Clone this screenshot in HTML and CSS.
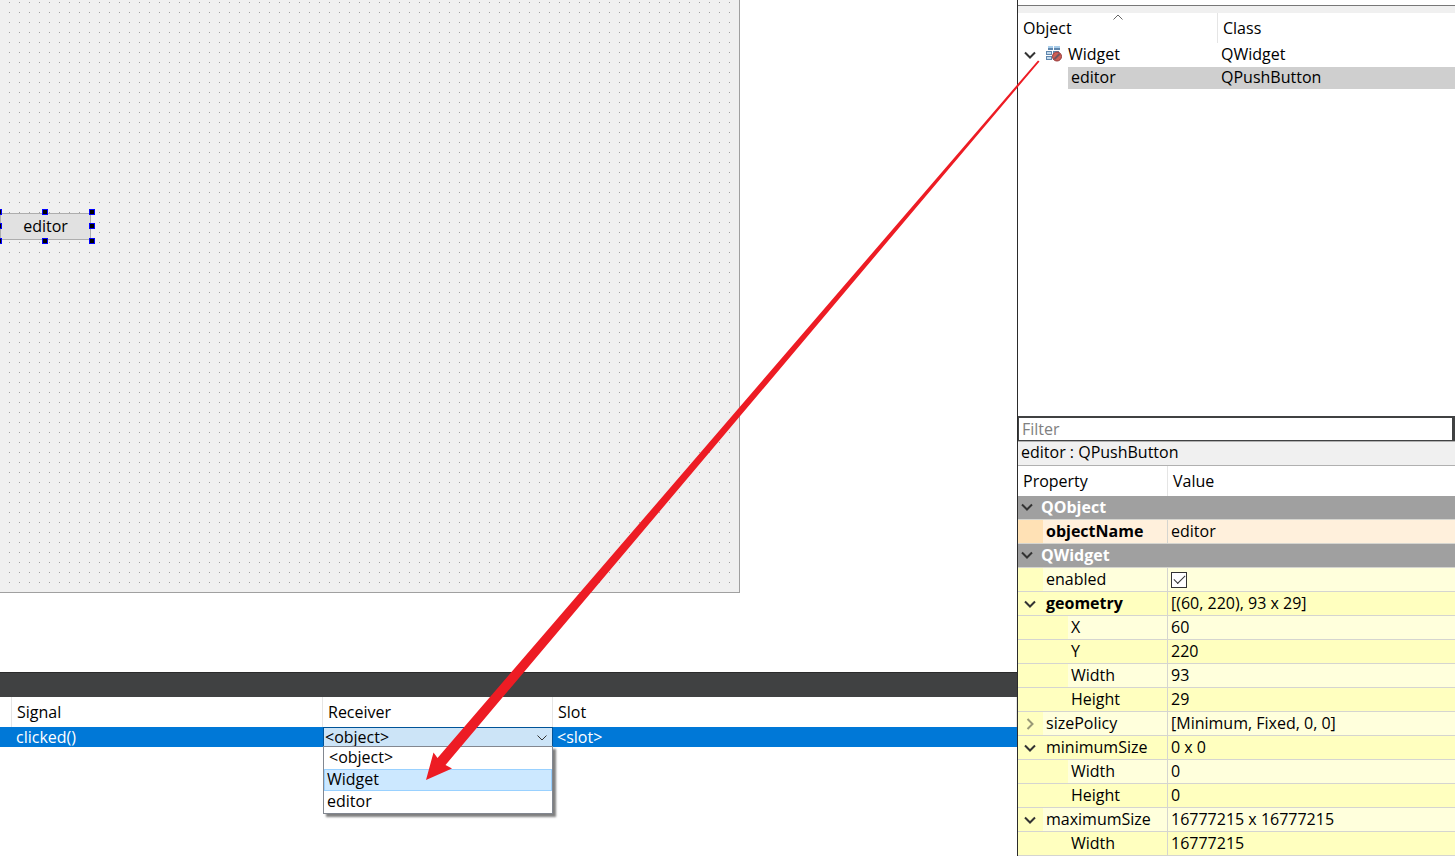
FILE: index.html
```html
<!DOCTYPE html>
<html lang="en">
<head>
<meta charset="utf-8">
<title>Form designer</title>
<link rel="stylesheet" href="styles.css">
</head>
<body>
<svg class="symbols" aria-hidden="true">
  <symbol id="chevron" viewBox="0 0 12 8"><path d="M1 1.5 6 6.5 11 1.5" fill="none" stroke="currentColor" stroke-width="2"/></symbol>
  <symbol id="chevron-thin" viewBox="0 0 12 8"><path d="M1.500 1.500 6 6 10.500 1.500" fill="none" stroke="currentColor" stroke-width="1"/></symbol>
</svg>
<div class="app">
  <main class="workspace">
    <section class="design-area">
      <div class="form">
        <div class="selection">
          <button class="push-button" type="button">editor</button>
          <span class="handle top left"></span><span class="handle top center"></span><span class="handle top right"></span>
          <span class="handle middle left"></span><span class="handle middle right"></span>
          <span class="handle bottom left"></span><span class="handle bottom center"></span><span class="handle bottom right"></span>
        </div>
      </div>
    </section>
    <section class="signals">
      <div class="dock-bar"></div>
      <table class="signal-table">
        <colgroup><col class="col-sender"><col class="col-signal"><col class="col-receiver"><col></colgroup>
        <thead><tr><th></th><th>Signal</th><th>Receiver</th><th>Slot</th></tr></thead>
        <tbody><tr>
          <td></td>
          <td>clicked()</td>
          <td class="combo-cell">
            <div class="combo">
              <select class="combo-select" aria-label="Receiver"><option>&lt;object&gt;</option><option>Widget</option><option>editor</option></select>
              <svg class="combo-arrow"><use href="#chevron-thin"/></svg>
              <ul class="combo-list">
                <li class="placeholder">&lt;object&gt;</li>
                <li class="active">Widget</li>
                <li>editor</li>
              </ul>
            </div>
          </td>
          <td>&lt;slot&gt;</td>
        </tr></tbody>
      </table>
    </section>
  </main>
  <aside class="sidebar">
    <div class="dock-edge"></div>
    <section class="inspector">
      <svg class="sort-arrow" viewBox="0 0 10 6"><path d="M.5 5.500 5 1 9.500 5.500" fill="none" stroke="#666"/></svg>
      <table class="object-table">
        <colgroup><col class="col-object"><col></colgroup>
        <thead><tr><th>Object</th><th>Class</th></tr></thead>
        <tbody>
          <tr>
            <td><div class="tree-cell">
              <svg class="chevron"><use href="#chevron"/></svg>
              <svg class="widget-icon" viewBox="0 0 18 18">
                <path d="M3 1h5v4H3zM9 1h6v4H9zM1 6h6v4H1zM8 6h6v4H8zM1 11h6v4H1zM8 11h6v4H8z" fill="#5f86ad"/>
                <path d="M3 1h5v2H3zM9 1h6v2H9z" fill="#a9cdea"/>
                <path d="M2 7h4v2H2zM9 7h4v2H9zM2 12h4v2H2z" fill="#c3d9ec"/>
                <circle cx="12" cy="11.500" r="4.500" fill="#cf5f55" stroke="#96383a"/>
                <path d="M9.500 14 14.500 9" stroke="#6f5560" stroke-width="2"/>
              </svg>
              <span>Widget</span>
            </div></td>
            <td>QWidget</td>
          </tr>
          <tr class="selected"><td><div class="tree-child">editor</div></td><td>QPushButton</td></tr>
        </tbody>
      </table>
    </section>
    <section class="properties">
      <input class="filter" type="text" placeholder="Filter" aria-label="Filter">
      <div class="object-label">editor : QPushButton</div>
      <table class="property-table">
        <colgroup><col class="col-property"><col></colgroup>
        <thead><tr><th>Property</th><th>Value</th></tr></thead>
        <tbody>
          <tr class="group"><td colspan="2"><div class="group-name"><svg class="chevron"><use href="#chevron"/></svg>QObject</div></td></tr>
          <tr class="peach changed"><td><div class="name">objectName</div></td><td>editor</td></tr>
          <tr class="group"><td colspan="2"><div class="group-name"><svg class="chevron"><use href="#chevron"/></svg>QWidget</div></td></tr>
          <tr class="light"><td><div class="name"><label for="enabled">enabled</label></div></td><td><input class="check" type="checkbox" id="enabled" checked></td></tr>
          <tr class="changed"><td><div class="name"><svg class="chevron"><use href="#chevron"/></svg>geometry</div></td><td>[(60, 220), 93 x 29]</td></tr>
          <tr class="light"><td><div class="name child">X</div></td><td>60</td></tr>
          <tr><td><div class="name child">Y</div></td><td>220</td></tr>
          <tr class="light"><td><div class="name child">Width</div></td><td>93</td></tr>
          <tr><td><div class="name child">Height</div></td><td>29</td></tr>
          <tr class="light"><td><div class="name"><svg class="chevron closed"><use href="#chevron"/></svg>sizePolicy</div></td><td>[Minimum, Fixed, 0, 0]</td></tr>
          <tr><td><div class="name"><svg class="chevron"><use href="#chevron"/></svg>minimumSize</div></td><td>0 x 0</td></tr>
          <tr class="light"><td><div class="name child">Width</div></td><td>0</td></tr>
          <tr><td><div class="name child">Height</div></td><td>0</td></tr>
          <tr class="light"><td><div class="name"><svg class="chevron"><use href="#chevron"/></svg>maximumSize</div></td><td>16777215 x 16777215</td></tr>
          <tr><td><div class="name child">Width</div></td><td>16777215</td></tr>
        </tbody>
      </table>
    </section>
  </aside>
  <svg class="pointer" viewBox="0 0 1455 856" preserveAspectRatio="none" aria-hidden="true">
    <path d="M426 780 433.500 752.500 437.500 758 1038 60.500 1039.500 61.500 445.500 765 452 768.500Z" fill="#ed1c24"/>
  </svg>
</div>
</body>
</html>
```
FILE: styles.css
```css
* { box-sizing: border-box; }

body {
  margin: 0;
  background: #fff;
  color: #000;
  font: 16px/20px "Open Sans", "Noto Sans", sans-serif;
}

button, input, select { font: inherit; color: inherit; }

.symbols { display: none; }

.app {
  position: relative;
  display: grid;
  grid-template-columns: minmax(0, 1017fr) minmax(0, 438fr);
  min-height: 100vh;
}

.workspace { display: flex; flex-direction: column; }

.design-area { flex: 1; }

.form {
  width: 740px;
  max-width: 100%;
  height: 593px;
  padding-top: 213px;
  border: solid #a0a0a0;
  border-width: 0 1px 1px 0;
  background: #f0f0f0 conic-gradient(from 0deg at 1px 1px, transparent 270deg, #a0a0a0 0) 9px 2px / 10px 10px;
}

.selection { position: relative; width: 91px; }

.push-button {
  display: block;
  width: 100%;
  height: 27px;
  padding: 0 0 2px;
  border: 1px solid #adadad;
  background: #e1e1e1;
}

.handle {
  position: absolute;
  width: 6px;
  height: 6px;
  border: 1px solid #00f;
  background: #000;
}
.top { top: -4px; }
.middle { top: 10px; }
.bottom { bottom: -4px; }
.left { left: -4px; }
.center { left: 42px; }
.right { right: -4px; }

table { width: 100%; border-collapse: separate; border-spacing: 0; table-layout: fixed; }
th, td { padding: 0; text-align: left; white-space: nowrap; }
th { height: 30px; font-weight: 400; border-right: 1px solid #e5e5e5; }

.signals { height: 184px; }
.dock-bar { height: 25px; background: #404142; border-top: 1px solid #2b2b2b; }
.col-sender { width: 12px; }
.col-signal { width: 311px; }
.col-receiver { width: 230px; }
.signal-table th { padding-left: 5px; }
.signal-table th:first-child { padding: 0; }
.signal-table td { height: 20px; padding-left: 4px; background: #0078d7; color: #fff; }
.signal-table td:first-child, .signal-table .combo-cell { padding: 0; }

.combo { position: relative; color: #000; }
.combo-select {
  display: block;
  width: 100%;
  height: 20px;
  padding: 0 1px;
  border: 1px solid #005499;
  border-radius: 0;
  background: #cce4f7;
  line-height: 18px;
  appearance: none;
}
.combo-arrow { position: absolute; top: 7px; right: 5px; width: 12px; height: 8px; color: #333; }
.combo-list {
  position: absolute;
  top: 19px;
  left: 0;
  width: 100%;
  margin: 0;
  padding: 0;
  border: 1px solid #828790;
  background: #fff;
  box-shadow: 3px 3px 2px #00000080;
  list-style: none;
}
.combo-list li { height: 22px; padding-left: 2px; border: 1px solid transparent; line-height: 18px; }
.combo-list .placeholder { padding-left: 4px; }
.combo-list .active { border-color: #99d1ff; background: #cce8ff; }

.sidebar { display: flex; flex-direction: column; border-left: 1px solid #2b2b2b; }
.dock-edge { height: 13px; border-bottom: 7px solid #f0f0f0; background: linear-gradient(#fff 5px, #777 5px); background-clip: padding-box; }

.inspector { position: relative; flex: 1; }
.sort-arrow { position: absolute; top: 1px; left: 95px; width: 10px; height: 6px; }
.col-object { width: 200px; }
.object-table th { padding-left: 5px; }
.object-table th:last-child, .property-table th:last-child { border-right: 0; }
.object-table td { height: 24px; padding: 0 0 2px 3px; }
.object-table td:first-child { padding-left: 0; }
.object-table .selected td { height: 22px; padding-bottom: 0; line-height: 20px; }
.object-table .selected td:last-child { padding-bottom: 2px; }
.selected td:last-child { background: #cfcfcf; }
.tree-cell { display: flex; align-items: center; padding-left: 6px; }
.tree-cell .chevron { margin-top: 2px; }
.widget-icon { width: 18px; height: 18px; margin: 0 5px 0 9px; }
.tree-child { height: 22px; margin-left: 50px; padding-left: 3px; background: #cfcfcf; }

.chevron { flex: none; width: 12px; height: 8px; color: #333; }
.closed { color: #999977; transform: rotate(-90deg); }

.filter {
  display: block;
  width: 100%;
  height: 25px;
  padding: 0 3px;
  border: solid #404142;
  border-width: 2px 3px 1px 1px;
  border-radius: 0;
  background: #fff;
}
.filter::placeholder { color: #808080; opacity: 1; }
.object-label {
  height: 25px;
  padding-left: 3px;
  border: solid #b0b0b0;
  border-width: 1px 0;
  background: #f0f0f0;
  line-height: 20px;
}

.col-property { width: 150px; }
.property-table th { padding-left: 5px; }
.property-table td { height: 24px; padding: 0 0 2px 3px; border-bottom: 1px solid #d5d5d0; background: #ffffbf; }
.property-table td:first-child { padding: 0; border-right: 1px solid #d5d5d0; }
.property-table .group td { border-right: 0; background: #a0a0a0; color: #fff; font-weight: 700; }
.group-name { display: flex; align-items: center; height: 23px; padding: 0 0 2px 3px; }
.group .chevron { margin-right: 8px; }
.name { display: flex; align-items: center; height: 23px; padding: 0 0 2px 28px; }
.name .chevron { margin: 2px 10px 0 -22px; }
.name.child { padding-left: 53px; }
.changed .name { font-weight: 700; }
.light td { background: #ffffdc; }
.light .name { background: linear-gradient(to right, #ffffbf 25px, transparent 25px); }
.light .child { background: linear-gradient(to right, #ffffbf 50px, transparent 50px); }
.property-table .light td { background: #ffffdc; }
.property-table .peach td { background: #fff0dc; }
.peach .name { background: linear-gradient(to right, #ffe1b5 25px, transparent 25px); }

.check {
  display: grid;
  place-items: center;
  width: 16px;
  height: 16px;
  margin: 2px 0 0;
  border: 1px solid #333;
  background: #fff;
  appearance: none;
}
.check:checked::before {
  content: "";
  width: 10px;
  height: 5px;
  margin-bottom: 3px;
  border: solid #333;
  border-width: 0 0 1px 1px;
  transform: rotate(-45deg);
}

.pointer { position: absolute; inset: 0; width: 100%; height: 100%; pointer-events: none; }
```
